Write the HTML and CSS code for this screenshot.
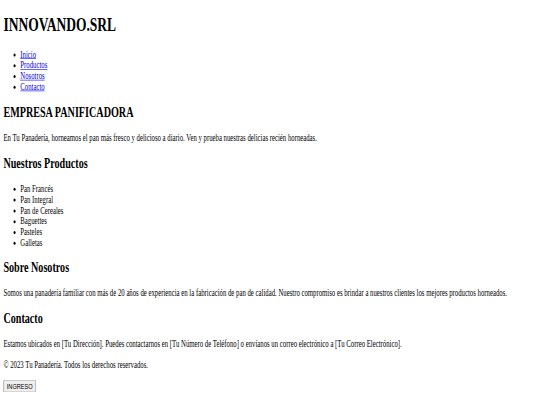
FILE: index.html
```html
<!DOCTYPE html>
<html lang="es">
<head>
<meta charset="utf-8">
<title>INNOVANDO.SRL</title>
<link rel="stylesheet" href="styles.css">
</head>
<body>
<div class="viewport">
<div class="page">
  <header>
    <h1>INNOVANDO.SRL</h1>
    <nav>
      <ul class="nav-list">
        <li><a href="#inicio">Inicio</a></li>
        <li><a href="#productos">Productos</a></li>
        <li><a href="#nosotros">Nosotros</a></li>
        <li><a href="#contacto">Contacto</a></li>
      </ul>
    </nav>
  </header>
  <section id="inicio">
    <h2>EMPRESA PANIFICADORA</h2>
    <p>En Tu Panadería, horneamos el pan más fresco y delicioso a diario. Ven y prueba nuestras delicias recién horneadas.</p>
  </section>
  <section id="productos">
    <h2>Nuestros Productos</h2>
    <ul>
      <li>Pan Francés</li>
      <li>Pan Integral</li>
      <li>Pan de Cereales</li>
      <li>Baguettes</li>
      <li>Pasteles</li>
      <li>Galletas</li>
    </ul>
  </section>
  <section id="nosotros">
    <h2>Sobre Nosotros</h2>
    <p>Somos una panadería familiar con más de 20 años de experiencia en la fabricación de pan de calidad. Nuestro compromiso es brindar a nuestros clientes los mejores productos horneados.</p>
  </section>
  <section id="contacto">
    <h2>Contacto</h2>
    <p>Estamos ubicados en [Tu Dirección]. Puedes contactarnos en [Tu Número de Teléfono] o envíanos un correo electrónico a [Tu Correo Electrónico].</p>
  </section>
  <footer>
    <p>&copy; 2023 Tu Panadería. Todos los derechos reservados.</p>
    <button class="btn">INGRESO</button>
  </footer>
</div>
</div>
</body>
</html>
```
FILE: styles.css
```css
html, body {
  margin: 0;
  padding: 0;
  background: #fff;
  overflow: hidden;
}
.viewport {
  width: 540px;
  height: 405px;
  overflow: hidden;
}
.page {
  width: 1270px;
  padding: 2px 8px 8px;
  font-family: "Liberation Serif", "Times New Roman", serif;
  font-size: 16px;
  color: #000;
  transform: scale(0.422, 0.6);
  transform-origin: 0 0;
}
.page a {
  color: #0000ee;
}
.nav-list {
  margin-top: 13px;
  margin-bottom: 19px;
}
.btn {
  font-family: "Liberation Sans", Arial, sans-serif;
  font-size: 13.333px;
}
```
